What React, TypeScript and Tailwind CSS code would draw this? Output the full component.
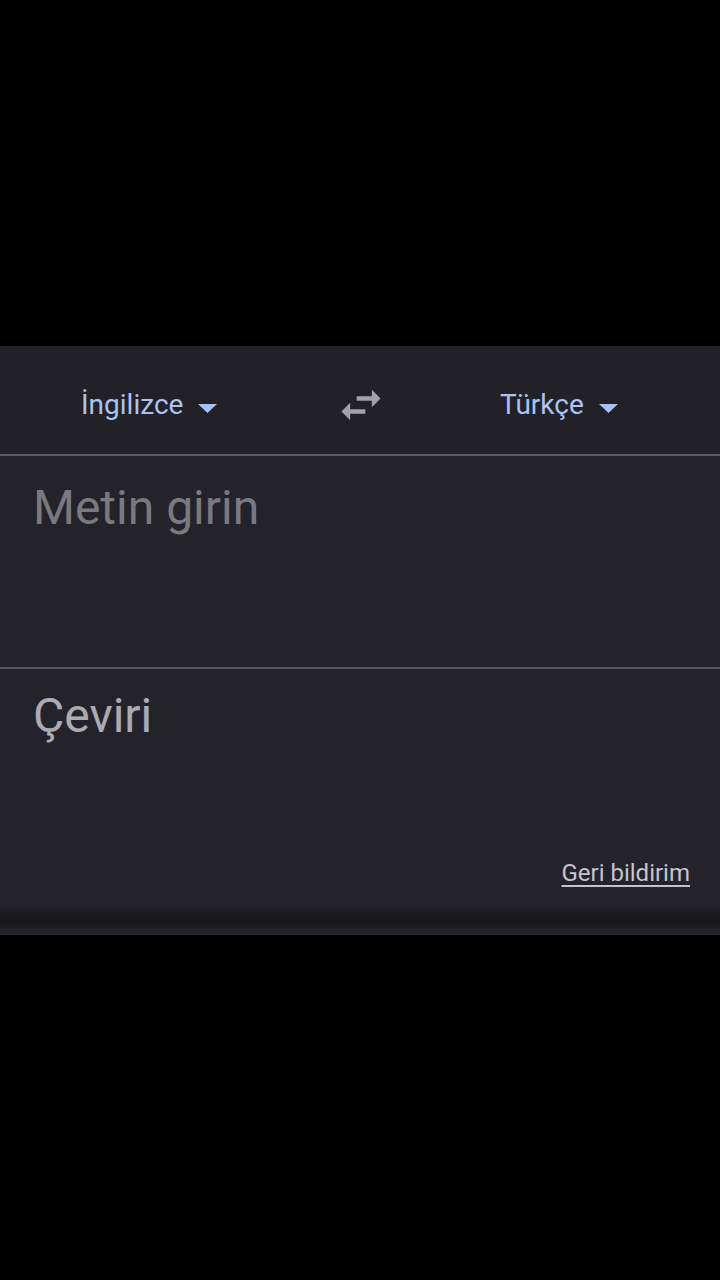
import React from "react";

function Caret() {
  return (
    <svg width="19" height="9" viewBox="0 0 19 9" className="ml-[15px] mt-[6px] shrink-0">
      <path d="M0 0 L19 0 L9.5 9 Z" fill="#a9c3f6" />
    </svg>
  );
}

export default function App() {
  return (
    <div
      className="w-[720px] h-[1280px] bg-black flex flex-col"
      style={{ fontFamily: "Roboto, 'Noto Sans', sans-serif" }}
    >
      <div className="h-[346px]" />
      <div className="flex flex-col bg-[#24232a]">
        <div className="h-[108px] flex items-center bg-[#222127] pt-[10px]">
          <div className="w-[300px] flex items-center pl-[81px]">
            <span className="text-[28px] text-[#a9c3f6] leading-none">İngilizce</span>
            <Caret />
          </div>
          <div className="w-[122px] flex items-center justify-center">
            <svg width="52" height="52" viewBox="0 0 24 24">
              <path
                d="M6.99 11L3 15l3.99 4v-3H14v-2H6.99v-3zM21 9l-3.99-4v3H10v2h7.01v3L21 9z"
                fill="#a3a2aa"
              />
            </svg>
          </div>
          <div className="flex items-center pl-[78px]">
            <span className="text-[28px] text-[#a9c3f6] leading-none">Türkçe</span>
            <Caret />
          </div>
        </div>
        <div className="h-[2px] bg-[#5c5b62]" />
        <div className="h-[211px] pl-[33px] pt-[24px] bg-[#24232c]">
          <div className="text-[48px] leading-[56px] text-[#7a7980]">Metin girin</div>
        </div>
        <div className="h-[2px] bg-[#56555c]" />
        <div className="h-[237px] flex flex-col bg-[#24232c]">
          <div className="pl-[33px] pt-[19px] text-[48px] leading-[56px] text-[#acabb3]">Çeviri</div>
          <div className="flex-1" />
          <div className="flex justify-end pr-[30px] pb-[19px]">
            <span className="text-[24px] leading-[28px] text-[#c6c5cd] underline underline-offset-[4px] decoration-[2px]">
              Geri bildirim
            </span>
          </div>
        </div>
        <div className="h-[29px] bg-gradient-to-b from-[#222128] via-[#18171c] to-[#28272d]" />
      </div>
      <div className="flex-1 bg-black" />
    </div>
  );
}
